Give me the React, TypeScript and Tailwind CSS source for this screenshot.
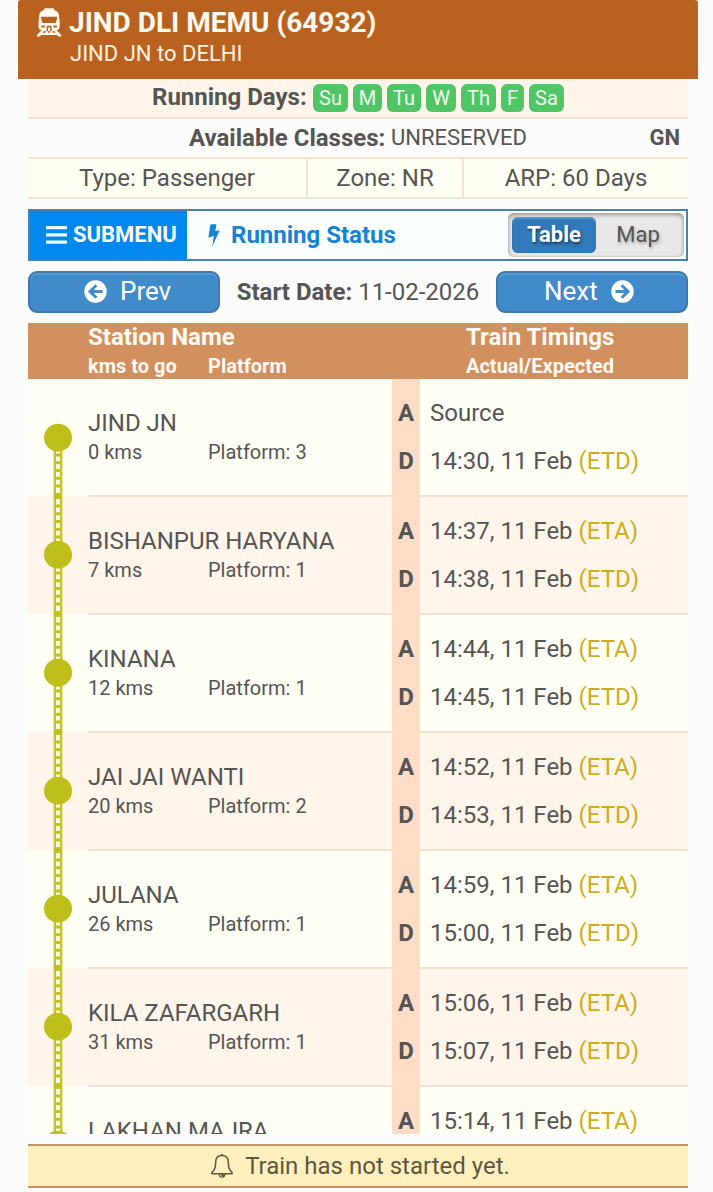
import React from "react";

type Stop = {
  name: string;
  kms?: string;
  platform?: string;
  arrival: string;
  departure?: string;
};

const stops: Stop[] = [
  { name: "JIND JN", kms: "0 kms", platform: "3", arrival: "", departure: "14:30" },
  { name: "BISHANPUR HARYANA", kms: "7 kms", platform: "1", arrival: "14:37", departure: "14:38" },
  { name: "KINANA", kms: "12 kms", platform: "1", arrival: "14:44", departure: "14:45" },
  { name: "JAI JAI WANTI", kms: "20 kms", platform: "2", arrival: "14:52", departure: "14:53" },
  { name: "JULANA", kms: "26 kms", platform: "1", arrival: "14:59", departure: "15:00" },
  { name: "KILA ZAFARGARH", kms: "31 kms", platform: "1", arrival: "15:06", departure: "15:07" },
  { name: "LAKHAN MAJRA", arrival: "15:14" },
];

const days = [
  { label: "Su", width: "w-[35px]" },
  { label: "M", width: "w-[29px]" },
  { label: "Tu", width: "w-[34px]" },
  { label: "W", width: "w-[30px]" },
  { label: "Th", width: "w-[35px]" },
  { label: "F", width: "w-[23px]" },
  { label: "Sa", width: "w-[35px]" },
];

function TrainIcon() {
  return (
    <svg width="26" height="29" viewBox="0 0 26 29" className="shrink-0">
      <path
        fill="#fffaf0"
        fillRule="evenodd"
        d="M10 .2h6.500q1.500 0 1.800 1.300l.2.700Q22.500 3.200 23 7.200l.7 8V19q0 2.600-2.700 3.200h-.5L25.300 27v1.400h-2.600L20.800 27H5.400L3.500 28.400H.9V27l4.800-4.800h-.5Q2.500 21.600 2.500 19v-3.800l.7-8Q3.700 3.200 7.700 2.200l.2-.7Q8.300.2 10 .2ZM5.600 8.800q-.8 0-.6.900l1 4q.3 1.200 1.500 1.200h11.200q1.200 0 1.500-1.200l1-4q.2-.9-.6-.9ZM5.400 17.600v1.800h3.400v-1.800ZM17.400 17.600v1.800h3.400v-1.800ZM10.600 18.800q0-1 1-1h3q1 0 1 1v4.400h-1.400v-3.600H12v3.600h-1.400ZM7.800 23.300 6.500 24.800h3l.4-1.500ZM12 23.300v1.500h2.200v-1.500ZM16.300 23.300l.4 1.500h3l-1.300-1.500Z"
      />
    </svg>
  );
}

function ArrowCircle({ right = false }: { right?: boolean }) {
  return (
    <svg width="23" height="23" viewBox="0 0 23 23" className={right ? "rotate-180" : ""}>
      <circle cx="11.500" cy="11.500" r="11.200" fill="#fff" />
      <path
        d="M12.400 5.200 6 11.500l6.400 6.300M6.500 11.500H18.500"
        fill="none"
        stroke="#428bca"
        strokeWidth="3"
      />
    </svg>
  );
}

function BellIcon() {
  return (
    <svg width="24" height="26" viewBox="0 0 24 26">
      <path
        d="M12 2.600C7.800 2.600 5.700 5.600 5.700 9.300c0 5.500-1.200 8.200-3.600 10.100-.6.600-.4 1.300.3 1.300h19.200c.7 0 .9-.7.3-1.300-2.400-1.900-3.600-4.600-3.600-10.100 0-3.700-2.100-6.700-6.300-6.700Z"
        fill="none"
        stroke="#5c5840"
        strokeWidth="1.500"
      />
      <path d="M10.700 2.300a1.300 1.300 0 1 1 2.600 0ZM8.500 21.200h7a3.500 3.500 0 0 1-7 0Z" fill="#5c5840" />
      <path d="M10.200 21.800q.4 1.500 1.900 1.700" fill="none" stroke="#fff0be" strokeWidth="1" />
    </svg>
  );
}

const ties = [10, 17.7, 25.5, 33.3, 41, 77, 84.7, 92.5, 100.3, 108];

function Track({ first }: { first: boolean }) {
  return (
    <svg
      width="60"
      height="118"
      viewBox="0 0 60 118"
      className={first ? "-mt-px shrink-0" : "shrink-0"}
    >
      <g>
        <rect x="25.300" y={first ? 60 : 0} width="9.400" height="118" fill="#dfdf83" />
        <rect x="26.300" y={first ? 60 : 0} width="7.400" height="118" fill="#bfbf22" />
        <rect x="28" y={first ? 60 : 0} width="4" height="118" fill="#fffdf0" />
        {ties
          .filter((y) => !first || y > 60)
          .map((y) => (
            <ellipse key={y} cx="30" cy={y} rx="2.500" ry="1.700" fill="#bfbf22" />
          ))}
        {!first && <rect x="26" y="-4" width="8" height="7" rx="3" fill="#bfbf22" />}
        <rect x="26" y="115" width="8" height="7" rx="3" fill="#bfbf22" />
      </g>
      <circle cx="30" cy={first ? 59.7 : 58.7} r="14" fill="#bfbf1c" />
    </svg>
  );
}

function Timing({ time, kind }: { time: string; kind: string }) {
  if (!time) return <div className="h-12">Source</div>;
  return (
    <div className="h-12 whitespace-nowrap">
      {time}, 11 Feb <span className="text-[#cfac1f]">({kind})</span>
    </div>
  );
}

function StopRow({ stop, index }: { stop: Stop; index: number }) {
  const first = index === 0;
  const edge = first ? "-mt-0.5 border-transparent" : "-mt-px border-[#f2dfcc]";
  return (
    <div
      className={`flex shrink-0 ${first ? "h-[117px]" : "h-[118px]"} ${
        index % 2 ? "bg-[#fff5eb]" : "bg-[#fffff5]"
      }`}
    >
      <Track first={first} />
      <div className={`w-[304px] border-t-2 pt-[29px] ${edge}`}>
        <div className="h-[30px] text-2xl leading-[30px] whitespace-nowrap">{stop.name}</div>
        {stop.kms && (
          <div className="flex text-xl leading-7">
            <div className="w-[120px]">{stop.kms}</div>
            <div>Platform: {stop.platform}</div>
          </div>
        )}
      </div>
      <div
        className={`w-7 bg-[#ffdcc6] text-center text-2xl leading-[48px] font-bold ${
          first ? "pt-2.5" : "pt-[11px]"
        }`}
      >
        <div>A</div>
        {stop.departure && <div>D</div>}
      </div>
      <div className={`flex-1 border-t-2 pt-2.5 pl-2.5 text-2xl leading-[48px] ${edge}`}>
        <Timing time={stop.arrival} kind="ETA" />
        {stop.departure && <Timing time={stop.departure} kind="ETD" />}
      </div>
    </div>
  );
}

export default function App() {
  return (
    <div className="flex h-[1192px] w-[713px] flex-col overflow-hidden bg-[#fcfcfc] font-[Roboto,sans-serif] text-[#555]">
      <header className="ml-[18px] flex h-[79px] w-[680px] shrink-0 rounded-t-[3px] bg-[#b96220] pt-2 pl-[18px] text-[#fffaf0]">
        <TrainIcon />
        <div className="ml-[7px] pt-px">
          <h1 className="h-7 text-[28px] leading-7 font-bold">JIND DLI MEMU (64932)</h1>
          <div className="mt-[3px] ml-px text-[22px] leading-7 text-[#fff1e0]">JIND JN to DELHI</div>
        </div>
      </header>

      <main className="ml-7 flex w-[660px] flex-col">
        <div className="flex h-10 items-center border-b-2 border-[#f7e2d1] bg-[#fff5ea] pl-[124px]">
          <span className="w-[161px] pb-0.5 text-2xl font-bold whitespace-nowrap">Running Days:</span>
          <div className="flex gap-[5px]">
            {days.map((d) => (
              <span
                key={d.label}
                className={`h-7 rounded-md bg-[#50c565] text-center text-xl leading-7 text-[#f0fff2] ${d.width}`}
              >
                {d.label}
              </span>
            ))}
          </div>
        </div>

        <div className="flex h-10 items-center border-b-2 border-[#f7e2d1] pr-2 pb-px pl-[161px]">
          <span className="w-[202px] text-2xl font-bold whitespace-nowrap">Available Classes:</span>
          <span className="text-[22px]">UNRESERVED</span>
          <span className="ml-auto text-[22px] font-bold">GN</span>
        </div>

        <div className="flex h-10 border-b-2 border-[#f7e2d1] bg-[#fffff3] text-center text-2xl leading-[38px]">
          <div className="w-[280px] border-r-2 border-[#f7e2d1]">Type: Passenger</div>
          <div className="w-[156px] border-r-2 border-[#f7e2d1]">Zone: NR</div>
          <div className="flex-1">ARP: 60 Days</div>
        </div>

        <div className="mt-2.5 flex h-[52px] border-2 border-[#4a80a8]">
          <div className="flex w-[157px] items-center bg-[#0088ee] pl-4 text-white">
            <svg width="21" height="18" viewBox="0 0 21 18">
              <path d="M0 1.700h21M0 8.900h21M0 16.100h21" stroke="#effcff" strokeWidth="3.200" />
            </svg>
            <span className="ml-1.5 pb-px text-[22px] font-bold">SUBMENU</span>
          </div>
          <div className="flex flex-1 items-center bg-[#fcffff] pl-[20px] text-[#1583d5]">
            <svg width="14" height="23" viewBox="0 0 14 23">
              <path d="M3.500.3h6L8.300 7.100l4.400-.9L5.200 22.700l1.700-11-5.600 2.100Z" fill="#1583d5" />
            </svg>
            <span className="ml-[10px] text-2xl font-bold">Running Status</span>
          </div>
          <div className="mt-0.5 mr-0.5 flex h-11 w-[176px] rounded-md bg-[#e8e8e8] p-1 text-[22px] leading-9 shadow-[inset_0_2px_4px_#999,inset_0_0_2px_#aaa]">
            <div className="w-[84px] rounded-md bg-[#337abb] text-center font-bold text-white shadow-[inset_0_2px_1px_#5797ce,inset_0_0_2px_#286090] [text-shadow:1px_2px_3px_#173a58]">
              Table
            </div>
            <div className="flex-1 text-center [text-shadow:1px_2px_3px_#aaa]">Map</div>
          </div>
        </div>

        <div className="mt-2.5 flex h-[42px] justify-between text-2xl">
          <div className="flex w-48 items-center rounded-[9px] border-2 border-[#3d79ad] bg-[#428bca] pb-0.5 pl-[54px] text-[26px] text-white shadow-[inset_0_2px_0_#589bd2]">
            <ArrowCircle />
            <span className="ml-[13px]">Prev</span>
          </div>
          <div className="leading-[42px] whitespace-nowrap">
            <b>Start Date:</b> 11-02-2026
          </div>
          <div className="flex w-48 items-center rounded-[9px] border-2 border-[#3d79ad] bg-[#428bca] pb-0.5 pl-[46px] text-[26px] text-white shadow-[inset_0_2px_0_#589bd2]">
            <span className="mr-[13px]">Next</span>
            <ArrowCircle right />
          </div>
        </div>

        <div className="mt-2.5 flex h-14 bg-[#d2905f] pl-[60px] text-xl leading-7 font-bold text-[#fffaf3]">
          <div className="w-[378px]">
            <div className="text-2xl leading-[28px]">Station Name</div>
            <div className="flex leading-[30px]">
              <div className="w-[120px]">kms to go</div>
              <div>Platform</div>
            </div>
          </div>
          <div>
            <div className="text-2xl leading-[28px]">Train Timings</div>
            <div className="leading-[30px]">Actual/Expected</div>
          </div>
        </div>

        <div className="flex h-[755px] flex-col overflow-hidden">
          {stops.map((stop, i) => (
            <StopRow key={stop.name} stop={stop} index={i} />
          ))}
        </div>

        <div className="mt-2.5 flex h-11 items-center justify-center border-y-2 border-[#ca9063] bg-[#fff0be] pl-1 text-2xl text-[#5c5840]">
          <BellIcon />
          <span className="ml-[11px]">Train has not started yet.</span>
        </div>
      </main>
    </div>
  );
}
